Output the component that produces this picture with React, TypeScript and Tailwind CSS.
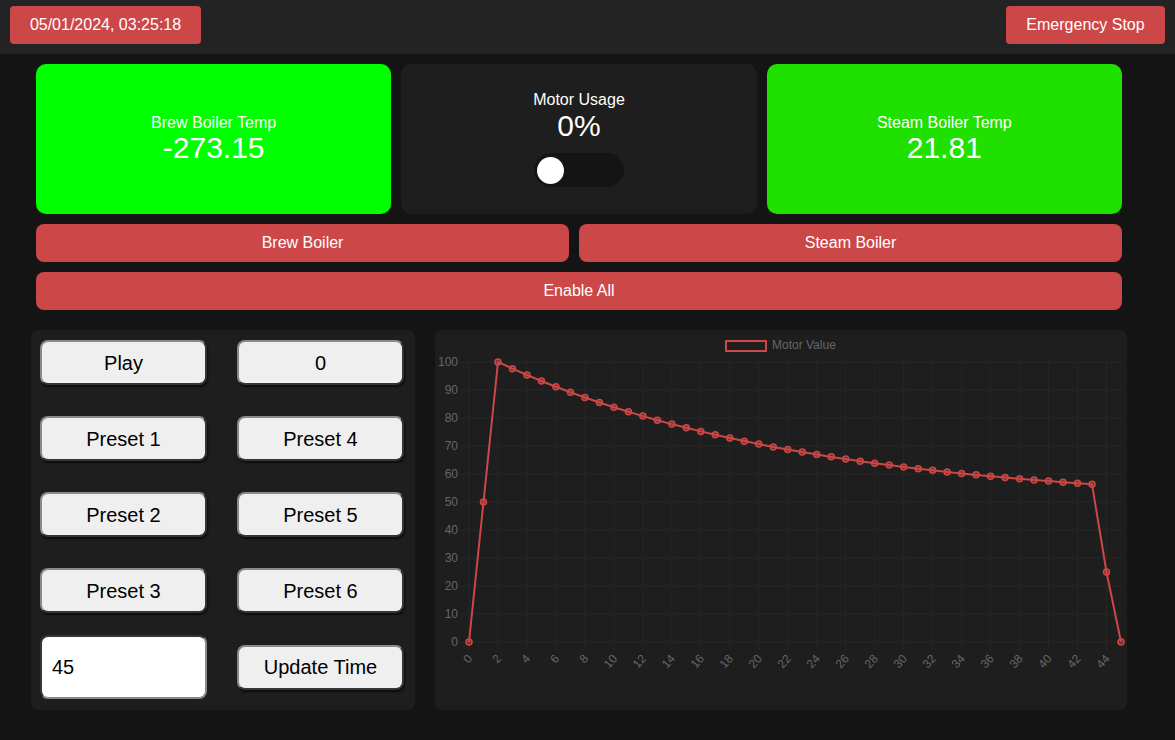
import React from "react";

const RED = "#cc4747";

// motor profile: ramp up, slow decay, then drop
const motorData: number[] = Array.from({ length: 46 }, (_, i) => {
  if (i === 0) return 0;
  if (i === 1) return 50;
  if (i === 44) return 25;
  if (i === 45) return 0;
  return 49.2 + 50.8 * Math.pow(0.62, (i - 2) / 10);
});

const StatCard: React.FC<{ label: string; value: string; bg: string }> = ({
  label,
  value,
  bg,
}) => (
  <div
    className={`flex-1 h-[150px] rounded-[10px] flex flex-col items-center justify-center text-white ${bg}`}
  >
    <span className="text-[16px] leading-[18px]">{label}</span>
    <span className="text-[30px] leading-[32px]">{value}</span>
  </div>
);

const PadButton: React.FC<{ children: React.ReactNode }> = ({ children }) => (
  <button className="h-[45px] w-full rounded-lg bg-[#efefef] text-[20px] text-black border-2 [border-style:outset] border-[#8a8a8a] shadow-[1px_2px_2px_rgba(0,0,0,0.6)]">
    {children}
  </button>
);

const MotorChart: React.FC = () => {
  const x0 = 34;
  const step = 652 / 45;
  const yTop = 32;
  const yBase = 312;
  const px = (i: number) => x0 + i * step;
  const py = (v: number) => yBase - (v / 100) * (yBase - yTop);
  const path = motorData
    .map((v, i) => `${i === 0 ? "M" : "L"}${px(i).toFixed(1)},${py(v).toFixed(1)}`)
    .join(" ");

  return (
    <svg width="692" height="380" className="block">
      {/* legend */}
      <rect x="291" y="11" width="40" height="10" fill="none" stroke={RED} strokeWidth="2" />
      <text x="337" y="19" fontSize="12" fill="#666" fontFamily="Liberation Sans, Arial, sans-serif">
        Motor Value
      </text>

      {/* grid */}
      {Array.from({ length: 11 }, (_, k) => (
        <line
          key={`h${k}`}
          x1={x0 - 8}
          x2={px(45)}
          y1={py(k * 10)}
          y2={py(k * 10)}
          stroke="#262626"
          strokeWidth="1"
        />
      ))}
      {Array.from({ length: 23 }, (_, k) => (
        <line
          key={`v${k}`}
          x1={px(k * 2)}
          x2={px(k * 2)}
          y1={yTop}
          y2={yBase + 8}
          stroke="#262626"
          strokeWidth="1"
        />
      ))}

      {/* y labels */}
      {Array.from({ length: 11 }, (_, k) => (
        <text
          key={`yl${k}`}
          x="23"
          y={py(k * 10) + 4}
          fontSize="12"
          fill="#666"
          textAnchor="end"
          fontFamily="Liberation Sans, Arial, sans-serif"
        >
          {k * 10}
        </text>
      ))}

      {/* x labels */}
      {Array.from({ length: 23 }, (_, k) => {
        const tx = px(k * 2) + 4;
        const ty = 329;
        return (
          <text
            key={`xl${k}`}
            x={tx}
            y={ty}
            fontSize="12"
            fill="#666"
            textAnchor="end"
            transform={`rotate(-48 ${tx} ${ty})`}
            fontFamily="Liberation Sans, Arial, sans-serif"
          >
            {k * 2}
          </text>
        );
      })}

      {/* data */}
      <path d={path} fill="none" stroke={RED} strokeWidth="2" />
      {motorData.map((v, i) => (
        <circle
          key={i}
          cx={px(i)}
          cy={py(v)}
          r="3"
          fill="rgba(204,71,71,0.45)"
          stroke={RED}
          strokeWidth="1.5"
        />
      ))}
    </svg>
  );
};

export default function App() {
  return (
    <div className="min-h-[740px] w-full bg-[#141414] font-['Liberation_Sans',Arial,sans-serif] text-white">
      {/* Header */}
      <header className="h-[54px] bg-[#232323] flex items-start justify-between px-[10px] pt-[6px]">
        <div className="h-[38px] w-[191px] rounded-[4px] bg-[#cc4747] flex items-center justify-center text-[16px]">
          05/01/2024, 03:25:18
        </div>
        <button className="h-[38px] w-[159px] rounded-[4px] bg-[#cc4747] text-[16px] text-white">
          Emergency Stop
        </button>
      </header>

      {/* Stats + controls */}
      <section className="pl-[36px] pr-[53px] pt-[10px] flex flex-col gap-[10px]">
        <div className="flex gap-[10px]">
          <StatCard label="Brew Boiler Temp" value="-273.15" bg="bg-[#00ff00]" />
          <div className="flex-1 h-[150px] rounded-[10px] bg-[#1e1e1e] flex flex-col items-center justify-center">
            <span className="text-[16px] leading-[18px]">Motor Usage</span>
            <span className="text-[30px] leading-[34px]">0%</span>
            <div className="mt-[10px] w-[90px] h-[34px] rounded-full bg-[#141414] flex items-center pl-[3px]">
              <div className="w-[27px] h-[27px] rounded-full bg-white" />
            </div>
          </div>
          <StatCard label="Steam Boiler Temp" value="21.81" bg="bg-[#20e000]" />
        </div>
        <div className="flex gap-[10px]">
          <button className="flex-auto h-[38px] rounded-[8px] bg-[#cc4747] text-[16px] text-white">
            Brew Boiler
          </button>
          <button className="flex-auto h-[38px] rounded-[8px] bg-[#cc4747] text-[16px] text-white">
            Steam Boiler
          </button>
        </div>
        <button className="h-[38px] w-full rounded-[8px] bg-[#cc4747] text-[16px] text-white">
          Enable All
        </button>
      </section>

      {/* Bottom */}
      <section className="pl-[31px] pr-[48px] pt-[20px] flex gap-[20px]">
        <div className="w-[384px] h-[380px] rounded-[8px] bg-[#1e1e1e] pl-[9px] pr-[11px] pt-[10px] pb-[11px] flex flex-col">
          <div className="grid grid-cols-2 gap-x-[30px] gap-y-[31px]">
            <PadButton>Play</PadButton>
            <PadButton>0</PadButton>
            <PadButton>Preset 1</PadButton>
            <PadButton>Preset 4</PadButton>
            <PadButton>Preset 2</PadButton>
            <PadButton>Preset 5</PadButton>
            <PadButton>Preset 3</PadButton>
            <PadButton>Preset 6</PadButton>
          </div>
          <div className="mt-[22px] grid grid-cols-2 gap-x-[30px] items-center h-[64px]">
            <input
              defaultValue="45"
              className="h-[64px] w-full rounded-lg bg-white text-black text-[20px] pl-[10px] border-2 [border-style:inset] border-[#8a8a8a] outline-none"
            />
            <PadButton>Update Time</PadButton>
          </div>
        </div>
        <div className="w-[692px] h-[380px] rounded-[8px] bg-[#1e1e1e] overflow-hidden">
          <MotorChart />
        </div>
      </section>
    </div>
  );
}
